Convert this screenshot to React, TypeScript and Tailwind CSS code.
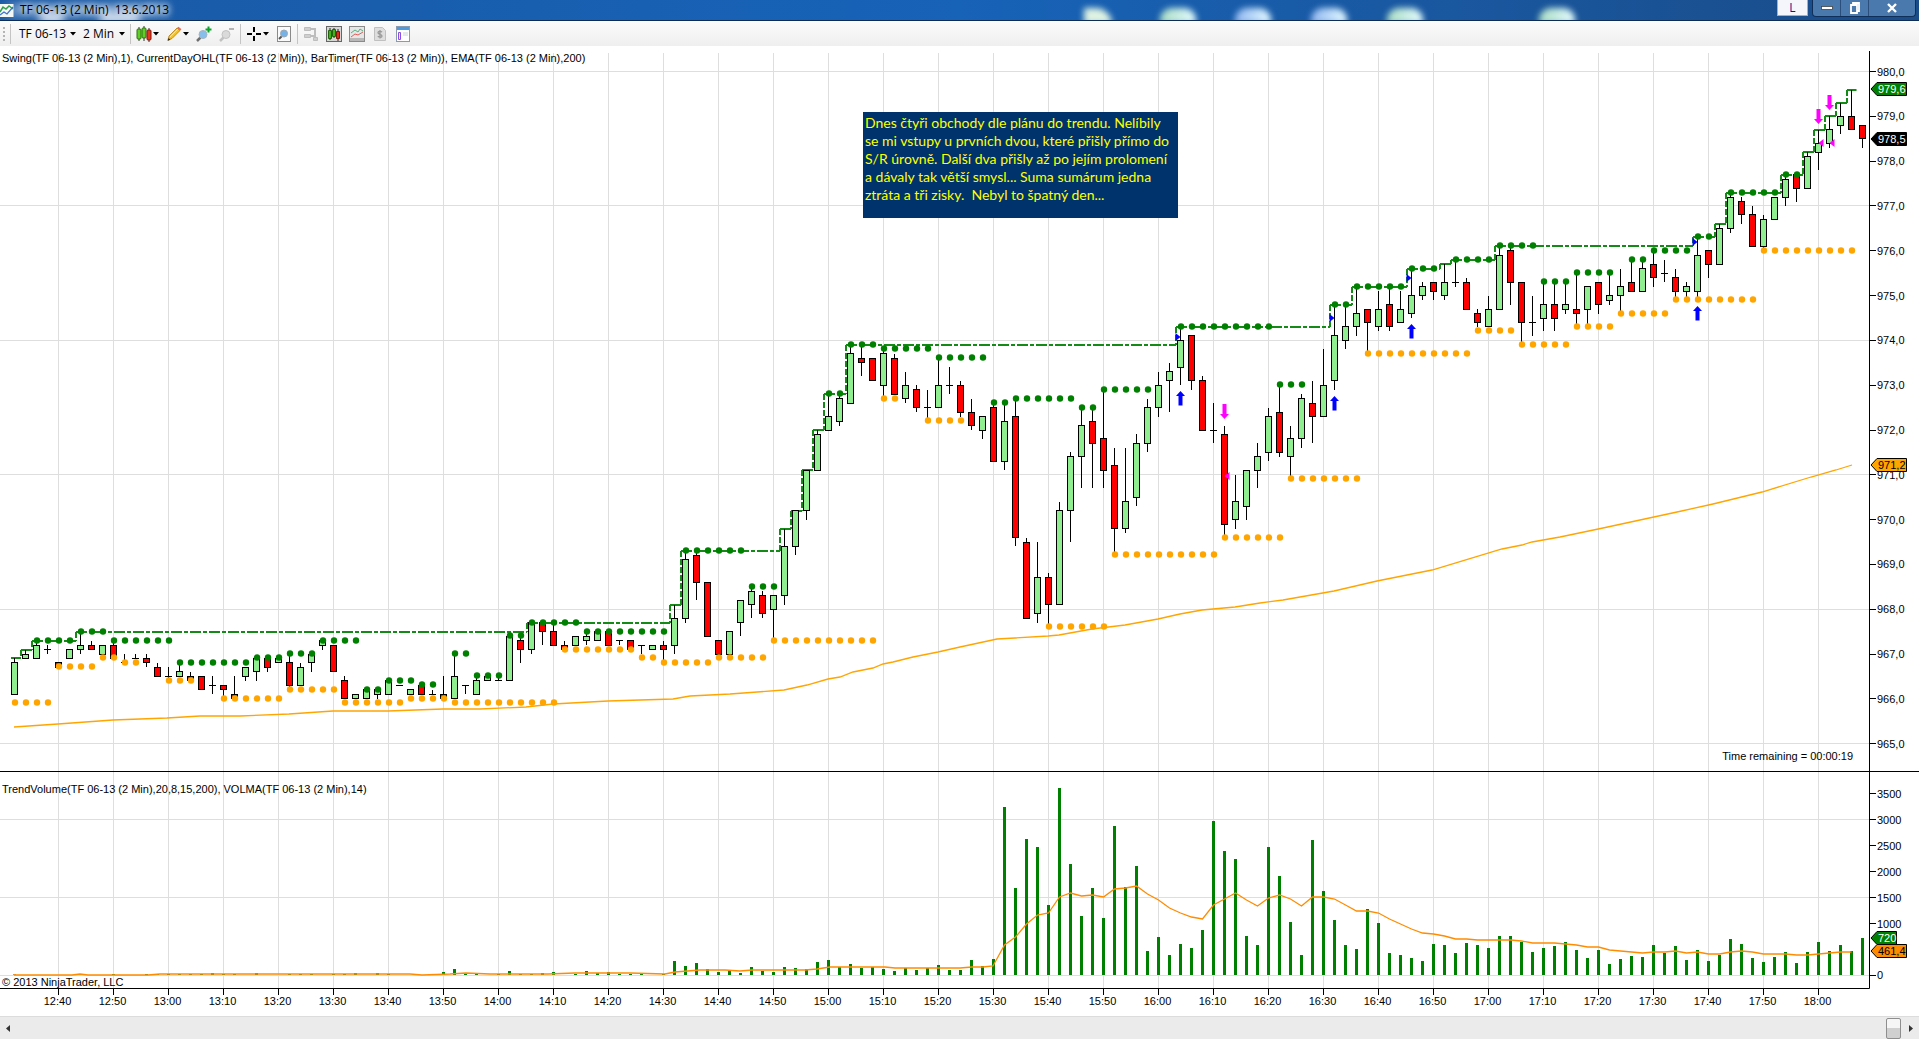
import React from 'react';

// Geometry of the chart canvas
const WIDTH = 1919;
const TOP = 46;
const HEIGHT = 970;
const AXIS_X = 1869;
const FIRST_X = 14.5;
const BAR_STEP = 11;

const barX = (i: number) => FIRST_X + i * BAR_STEP;
const priceY = (p: number) => 71.6 + (980 - p) * 44.8;
const snap = (v: number) => Math.floor(v) + 0.5;

type Candle = [open: number, high: number, low: number, close: number];
type Run = [from: number, to: number, price: number];

const candles: Candle[] = [
  [966.1, 966.9, 966.1, 966.8], [966.9, 967.1, 966.9, 967.0], [966.9, 967.3, 966.9, 967.2], [967.1, 967.2, 967.0, 967.1],
  [966.8, 966.8, 966.7, 966.7], [966.9, 967.1, 966.9, 967.1], [967.1, 967.5, 967.0, 967.2], [967.2, 967.3, 967.1, 967.1],
  [967.0, 967.2, 967.0, 967.2], [967.2, 967.3, 966.9, 966.9], [966.8, 967.0, 966.8, 966.8], [966.9, 967.0, 966.9, 966.9],
  [966.9, 967.0, 966.7, 966.8], [966.7, 966.8, 966.5, 966.5], [966.5, 966.7, 966.4, 966.5], [966.5, 966.8, 966.5, 966.6],
  [966.5, 966.6, 966.4, 966.4], [966.5, 966.5, 966.2, 966.2], [966.3, 966.5, 966.1, 966.3], [966.3, 966.3, 966.0, 966.2],
  [966.1, 966.5, 966.0, 966.0], [966.5, 966.7, 966.4, 966.7], [966.6, 966.9, 966.4, 966.9], [966.9, 966.9, 966.6, 966.7],
  [966.8, 966.9, 966.8, 966.9], [966.8, 967.0, 966.2, 966.3], [966.3, 966.8, 966.3, 966.7], [966.8, 967.0, 966.6, 967.0],
  [967.2, 967.3, 967.1, 967.3], [967.2, 967.2, 966.6, 966.6], [966.4, 966.5, 966.0, 966.0], [966.0, 966.1, 966.0, 966.1],
  [966.0, 966.2, 966.0, 966.2], [966.1, 966.2, 966.0, 966.2], [966.1, 966.4, 966.1, 966.4], [966.3, 966.3, 966.3, 966.3],
  [966.1, 966.2, 966.1, 966.2], [966.3, 966.3, 966.1, 966.1], [966.1, 966.2, 966.1, 966.1], [966.1, 966.5, 966.0, 966.0],
  [966.0, 967.0, 966.0, 966.5], [966.3, 966.3, 966.1, 966.3], [966.1, 966.5, 966.1, 966.4], [966.4, 966.5, 966.4, 966.5],
  [966.4, 966.5, 966.4, 966.4], [966.4, 967.4, 966.4, 967.4], [967.3, 967.4, 966.8, 967.1], [967.1, 967.7, 967.0, 967.7],
  [967.7, 967.7, 967.2, 967.5], [967.5, 967.7, 967.2, 967.2], [967.2, 967.3, 967.1, 967.1], [967.2, 967.4, 967.2, 967.4],
  [967.3, 967.5, 967.2, 967.4], [967.3, 967.5, 967.3, 967.5], [967.5, 967.5, 967.2, 967.2], [967.3, 967.3, 967.2, 967.3],
  [967.3, 967.3, 967.1, 967.1], [967.2, 967.2, 967.0, 967.2], [967.1, 967.2, 967.1, 967.2], [967.2, 967.3, 966.8, 967.1],
  [967.2, 968.1, 967.0, 967.8], [967.8, 969.3, 967.7, 969.1], [969.2, 969.3, 968.2, 968.6], [968.6, 968.6, 967.4, 967.4],
  [967.3, 967.3, 967.0, 967.0], [967.0, 967.5, 967.0, 967.5], [967.7, 968.2, 967.4, 968.2], [968.1, 968.5, 967.8, 968.4],
  [968.3, 968.4, 967.8, 967.9], [968.0, 968.3, 967.3, 968.3], [968.3, 969.8, 968.1, 969.4], [969.4, 970.2, 969.2, 970.2],
  [970.2, 971.1, 970.0, 971.1], [971.1, 972.0, 971.1, 971.9], [972.0, 972.8, 972.0, 972.3], [972.2, 972.8, 972.1, 972.7],
  [972.6, 973.9, 972.6, 973.7], [973.6, 973.9, 973.2, 973.5], [973.6, 973.6, 973.1, 973.1], [973.0, 973.8, 972.7, 973.7],
  [973.6, 973.7, 972.8, 972.8], [972.7, 973.3, 972.6, 973.0], [972.9, 973.0, 972.4, 972.5], [972.5, 972.9, 972.2, 972.5],
  [972.5, 973.6, 972.5, 973.0], [973.0, 973.4, 972.8, 973.0], [973.0, 973.1, 972.3, 972.4], [972.4, 972.7, 972.0, 972.1],
  [972.0, 972.3, 971.8, 972.3], [972.5, 972.6, 971.3, 971.3], [971.3, 972.6, 971.1, 972.2], [972.3, 972.7, 969.4, 969.6],
  [969.5, 969.6, 967.8, 967.8], [967.9, 969.5, 967.7, 968.7], [968.7, 968.8, 967.6, 968.1], [968.1, 970.4, 968.1, 970.2],
  [970.2, 971.5, 969.5, 971.4], [971.4, 972.5, 970.7, 972.1], [972.2, 972.5, 970.7, 971.7], [971.8, 972.9, 970.7, 971.1],
  [971.2, 971.6, 969.2, 969.8], [969.8, 971.6, 969.7, 970.4], [970.5, 971.9, 970.3, 971.7], [971.7, 972.7, 971.5, 972.5],
  [972.5, 973.3, 972.3, 973.0], [973.1, 973.5, 972.4, 973.3], [973.4, 974.3, 973.0, 974.0], [974.1, 974.1, 972.9, 973.1],
  [973.1, 973.2, 972.0, 972.0], [972.0, 972.6, 971.7, 972.0], [971.9, 972.1, 969.6, 969.9], [970.0, 971.0, 969.8, 970.4],
  [970.3, 971.1, 970.0, 971.1], [971.1, 971.7, 970.7, 971.4], [971.5, 972.5, 971.3, 972.3], [972.4, 973.0, 971.4, 971.5],
  [971.4, 972.1, 970.9, 971.8], [971.8, 972.8, 971.6, 972.7], [972.6, 973.1, 971.7, 972.3], [972.3, 973.8, 972.3, 973.0],
  [973.1, 974.8, 972.9, 974.1], [974.0, 974.8, 973.8, 974.3], [974.3, 975.2, 974.1, 974.6], [974.7, 974.7, 973.7, 974.4],
  [974.3, 975.1, 974.2, 974.7], [974.8, 975.2, 974.2, 974.3], [974.4, 975.1, 974.4, 974.7], [974.6, 975.6, 974.5, 975.0],
  [975.0, 975.3, 974.9, 975.2], [975.3, 975.3, 974.9, 975.1], [975.0, 975.7, 974.9, 975.3], [975.3, 975.8, 975.2, 975.3],
  [975.3, 975.4, 974.7, 974.7], [974.6, 974.7, 974.3, 974.4], [974.3, 975.0, 974.3, 974.7], [974.7, 976.1, 974.7, 975.9],
  [976.0, 976.1, 974.8, 975.3], [975.3, 975.3, 973.9, 974.4], [974.4, 975.0, 974.1, 974.4], [974.5, 975.3, 974.2, 974.8],
  [974.8, 975.3, 974.2, 974.5], [974.7, 975.3, 974.6, 974.8], [974.7, 975.5, 974.3, 974.6], [974.7, 975.2, 974.3, 975.2],
  [975.3, 975.3, 974.6, 974.8], [974.9, 975.5, 974.8, 975.0], [975.0, 975.6, 974.6, 975.2], [975.3, 975.8, 975.1, 975.1],
  [975.1, 975.8, 975.1, 975.6], [975.7, 976.0, 975.2, 975.4], [975.5, 975.8, 975.3, 975.5], [975.4, 975.6, 974.9, 975.1],
  [975.1, 975.3, 974.9, 975.2], [975.1, 976.3, 974.9, 975.9], [976.0, 976.0, 975.4, 975.7], [975.7, 976.6, 975.7, 976.5],
  [976.5, 977.3, 976.4, 977.2], [977.1, 977.2, 976.6, 976.8], [976.8, 977.0, 976.1, 976.1], [976.1, 976.8, 976.0, 976.7],
  [976.7, 977.2, 976.7, 977.2], [977.2, 977.7, 977.0, 977.6], [977.7, 977.7, 977.1, 977.4], [977.4, 978.2, 977.4, 978.1],
  [978.2, 978.7, 977.8, 978.4], [978.4, 979.0, 978.3, 978.7], [978.8, 979.3, 978.6, 979.0], [979.0, 979.6, 978.7, 978.7],
  [978.8, 978.8, 978.3, 978.5],
];

const swingHighs: Run[] = [
  [2, 5, 967.3], [6, 8, 967.5], [9, 14, 967.3], [15, 21, 966.8], [22, 24, 966.9], [25, 27, 967.0], [28, 31, 967.3],
  [32, 33, 966.2], [34, 36, 966.4], [37, 38, 966.3], [40, 41, 967.0], [42, 44, 966.5], [45, 46, 967.4], [47, 51, 967.7],
  [52, 59, 967.5], [61, 66, 969.3], [67, 69, 968.5], [74, 75, 972.8], [76, 78, 973.9], [79, 83, 973.8], [84, 88, 973.6],
  [89, 90, 972.6], [91, 96, 972.7], [97, 98, 972.5], [99, 103, 972.9], [106, 114, 974.3], [115, 117, 973.0],
  [120, 121, 974.8], [122, 126, 975.2], [127, 129, 975.6], [131, 134, 975.8], [135, 138, 976.1], [139, 141, 975.3],
  [142, 145, 975.5], [147, 148, 975.8], [149, 152, 976.0], [153, 154, 976.3], [156, 160, 977.3], [161, 162, 977.7],
];

const swingLows: Run[] = [
  [0, 3, 965.9], [4, 7, 966.7], [8, 9, 966.9], [10, 11, 966.8], [14, 16, 966.4], [19, 24, 966.0], [25, 29, 966.2],
  [30, 35, 965.9], [36, 39, 966.0], [40, 49, 965.9], [50, 56, 967.1], [57, 58, 966.9], [59, 63, 966.8], [64, 68, 966.9],
  [69, 78, 967.3], [79, 80, 972.7], [83, 86, 972.2], [94, 99, 967.6], [100, 109, 969.2], [110, 115, 969.6],
  [116, 122, 970.9], [123, 132, 973.7], [133, 136, 974.2], [137, 141, 973.9], [142, 145, 974.3], [146, 150, 974.6],
  [151, 158, 974.9], [159, 167, 976.0],
];

const ema =
  '14,727 58,724 113,720 167,718 200,716 240,716 289,714 333,711 388,711 443,709 480,709 526,707 553,704 608,701 673,699 690,696 730,694 784,690 807,685 828,679 840,677 853,672 873,668 883,664 893,662 913,657 938,652 960,647 997,639 1015,638 1048,636 1059,635 1070,633 1092,629 1125,625 1158,619 1180,614 1202,610 1235,607 1260,603 1283,600 1334,591 1377,581 1432,570 1502,549 1522,545 1532,542 1560,537 1603,528 1677,512 1713,504 1762,492 1811,477 1836,470 1852,465';

// Volume per bar, thirds of a pixel above the zero line
const volumes = [
  4, 0, 0, 0, 0, 0, 4, 0, 0, 3, 0, 0, 3, 3, 3, 3, 3, 3, 6, 3, 3, 0, 6, 0, 0, 3, 3, 3, 0, 3, 3, 6, 0, 6, 3, 0, 0, 0, 3,
  9, 18, 6, 6, 0, 2, 12, 3, 2, 6, 9, 0, 2, 12, 6, 9, 3, 2, 2, 0, 2, 42, 27, 36, 18, 9, 12, 6, 24, 13, 9, 24, 21, 18, 39,
  45, 24, 33, 21, 24, 18, 12, 21, 15, 21, 30, 15, 15, 45, 27, 48, 504, 261, 408, 384, 210, 561, 333, 177, 261, 171, 447,
  264, 327, 72, 114, 60, 93, 81, 135, 462, 372, 348, 117, 90, 384, 297, 159, 60, 405, 252, 165, 90, 78, 198, 156, 66, 60,
  51, 42, 93, 90, 66, 96, 90, 81, 117, 117, 99, 69, 81, 87, 99, 75, 51, 75, 33, 48, 57, 54, 90, 66, 87, 45, 75, 42, 60,
  108, 93, 51, 39, 54, 69, 36, 69, 99, 72, 90, 72, 111,
];

const volMaStart =
  '14,975 72,975 80,974 88,975 148,975 160,974 410,974 422,975 450,974 466,973 490,974 548,974 575,973 630,973 665,974 675,972 700,970 725,970 740,971 752,970 805,970 817,969 830,967 885,967 895,968 960,968 972,967 983,967 993,966';
// One value per bar from 15:32 on
const volMa = [
  945, 937, 924, 915, 913, 897, 893, 896, 895, 897, 889, 888, 886, 894, 900, 908, 913, 917, 919, 905, 899, 893, 900, 906,
  898, 895, 899, 906, 897, 897, 899, 905, 911, 911, 913, 919, 924, 929, 933, 934, 936, 939, 939, 940, 940, 940, 940, 941,
  943, 943, 943, 944, 945, 947, 947, 950, 951, 952, 953, 952, 952, 951, 953, 952, 954, 954, 952, 951, 952, 954, 954, 954,
  955, 955, 954, 953, 952, 952,
];

const VOL_ZERO = 975;
const volY = (v: number) => 975.4 - v * 0.0519;

const timeLabels = Array.from({ length: 33 }, (_, k) => {
  const minutes = 12 * 60 + 40 + k * 10;
  return {
    x: barX(4 + k * 5),
    text: `${Math.floor(minutes / 60)}:${String(minutes % 60).padStart(2, '0')}`,
  };
});

// Running high of the day, as flat stretches and the risers between them
const dayHighPaths = () => {
  let high = candles[0][1];
  let y = Math.round(priceY(high));
  let flat = `M${barX(0) - 3.5} ${y}`;
  let risers = '';
  for (let i = 1; i < candles.length - 1; i++) {
    if (candles[i][1] > high) {
      const x = barX(i) - 4.5;
      const from = y;
      high = candles[i][1];
      y = Math.round(priceY(high));
      flat += `H${x}M${x} ${y}`;
      risers += `M${x} ${y}V${from}`;
    }
  }
  return { flat: `${flat}H${barX(candles.length - 2) + 5}`, risers };
};

const DayHigh = () => {
  const { flat, risers } = dayHighPaths();
  return (
    <g stroke="#168a16" strokeWidth="2">
      <path d={flat} strokeDasharray="11 2 4 2" />
      <path d={risers} strokeDasharray="6 2" />
    </g>
  );
};

const Dots = ({ runs, color }: { runs: Run[]; color: string }) => (
  <g fill={color}>
    {runs.flatMap(([from, to, price]) =>
      Array.from({ length: to - from + 1 }, (_, k) => (
        <circle key={`${from}-${k}`} cx={barX(from + k) + 0.5} cy={Math.round(priceY(price)) - 0.5} r="3.2" />
      )),
    )}
  </g>
);

const CandleBar = ({ index, data }: { index: number; data: Candle }) => {
  const [open, high, low, close] = data;
  const x = barX(index);
  const top = snap(priceY(Math.max(open, close)));
  const bottom = snap(priceY(Math.min(open, close)));
  return (
    <g stroke="#000">
      {high !== low && <path d={`M${x} ${Math.round(priceY(high))}V${Math.round(priceY(low))}`} />}
      {open === close ? (
        <path d={`M${x - 3.5} ${top}h7`} />
      ) : (
        <rect x={x - 3} y={top} width="6" height={bottom - top} fill={close > open ? '#90ee90' : '#ff0000'} />
      )}
    </g>
  );
};

const UpArrow = ({ bar, y }: { bar: number; y: number }) => (
  <path transform={`translate(${barX(bar)} ${y})`} d="M0 0L4.5 5H2V14.5H-2V5H-4.5Z" fill="#0000ff" />
);

const DownArrow = ({ bar, y }: { bar: number; y: number }) => (
  <path transform={`translate(${barX(bar)} ${y})`} d="M0 15L4.5 10H2V0H-2V10H-4.5Z" fill="#ff00ff" />
);

interface FlagProps {
  y: number;
  right: number;
  fill: string;
  color: string;
  label: string;
}

const Flag = ({ y, right, fill, color, label }: FlagProps) => (
  <g>
    <path d={`M1871 ${y}L1877 ${y - 6.5}H${right}V${y + 6.5}H1877Z`} fill={fill} stroke="#000" />
    <text x="1878" y={y + 4} fill={color}>{label}</text>
  </g>
);

const Chart = () => (
  <svg
    viewBox={`0 ${TOP} ${WIDTH} ${HEIGHT}`}
    className="block w-full h-auto bg-white font-['Liberation_Sans',Arial,sans-serif] text-[11px]"
    fill="none"
  >
    {/* Grid */}
    <g stroke="#dedede">
      {timeLabels.map(t => <path key={t.text} d={`M${t.x} 53V988`} />)}
      {[980, 977, 974, 971, 968, 965].map(p => <path key={p} d={`M0 ${snap(priceY(p))}H${AXIS_X}`} />)}
      {[3000, 1500, 0].map(v => <path key={v} d={`M0 ${snap(volY(v))}H${AXIS_X}`} />)}
    </g>

    {/* Price panel */}
    <polyline points={ema} stroke="#ffa500" strokeWidth="1.3" />
    <DayHigh />
    {candles.map((c, i) => <CandleBar key={i} index={i} data={c} />)}
    <Dots runs={swingHighs} color="#008000" />
    <Dots runs={swingLows} color="#ffa500" />

    {/* Trades */}
    <UpArrow bar={106} y={391} />
    <UpArrow bar={120} y={396} />
    <UpArrow bar={127} y={324} />
    <UpArrow bar={153} y={306} />
    <DownArrow bar={110} y={404} />
    <DownArrow bar={164} y={109} />
    <DownArrow bar={165} y={95} />
    <g fill="#0000ff">
      {[[106, 337], [120, 318], [127, 278], [153, 242]].map(([bar, y]) => (
        <path key={bar} d={`M${barX(bar) - 5} ${y - 4}l5 4l-5 4z`} />
      ))}
    </g>
    <g fill="#ff00ff">
      {[[110, 476], [164, 143], [165, 143]].map(([bar, y]) => (
        <path key={bar} d={`M${barX(bar) + 5} ${y - 4}l-5 4l5 4z`} />
      ))}
    </g>

    {/* Volume panel */}
    <g fill="#008000">
      {volumes.map((v, i) => (
        v > 0 && (
          <rect
            key={i}
            x={barX(i) - 1.5}
            y={VOL_ZERO - Math.max(1, Math.round(v / 3))}
            width="3"
            height={Math.max(1, Math.round(v / 3))}
            fill={i < 9 ? '#a0a0a0' : undefined}
          />
        )
      ))}
    </g>
    <polyline
      points={`${volMaStart} ${volMa.map((y, k) => `${barX(90 + k)},${y}`).join(' ')}`}
      stroke="#ff8c00"
      strokeWidth="1.3"
    />

    {/* Axes */}
    <g stroke="#000">
      <path d="M1869.5 51V988.5H0" />
      <path d="M0 771.5H1919" />
      {timeLabels.map(t => <path key={t.text} d={`M${t.x} 989v6`} />)}
      {Array.from({ length: 16 }, (_, k) => <path key={k} d={`M1870 ${snap(priceY(980 - k))}h6`} />)}
      {[3500, 3000, 2500, 2000, 1500, 1000, 0].map(v => <path key={v} d={`M1870 ${snap(volY(v))}h6`} />)}
    </g>
    <g fill="#000">
      {timeLabels.map(t => <text key={t.text} x={t.x - 1} y="1005" textAnchor="middle">{t.text}</text>)}
      {Array.from({ length: 16 }, (_, k) => (
        <text key={k} x="1877" y={Math.round(priceY(980 - k)) + 4}>{980 - k},0</text>
      ))}
      {[3500, 3000, 2500, 2000, 1500, 1000, 0].map(v => (
        <text key={v} x="1877" y={Math.round(volY(v)) + 4}>{v}</text>
      ))}
    </g>
    <Flag y={89} right={1906.5} fill="#008000" color="#fff" label="979,6" />
    <Flag y={139} right={1906.5} fill="#000" color="#fff" label="978,5" />
    <Flag y={465} right={1906.5} fill="#ffa500" color="#000" label="971,2" />
    <Flag y={938} right={1896.5} fill="#008000" color="#fff" label="720" />
    <Flag y={951} right={1906.5} fill="#ff8c00" color="#000" label="461,4" />
  </svg>
);

const Caret = () => (
  <svg width="6" height="4" viewBox="0 0 6 4"><path d="M0 0h6L3 3.5z" fill="#000" /></svg>
);

const Divider = () => <span className="w-px h-5 -mx-0.5 bg-[#c4c4c4]" />;

const CandlesIcon = () => (
  <svg width="16" height="16" viewBox="0 0 16 16">
    <path d="M3 1v14M8 0v15M13 2v14" stroke="#333" />
    <rect x="1" y="3" width="4" height="10" rx="1" fill="#5fcf28" stroke="#2f6f12" />
    <rect x="6" y="2" width="4" height="10" rx="1" fill="#5fcf28" stroke="#2f6f12" />
    <rect x="11" y="4" width="4" height="10" rx="1" fill="#e8341c" stroke="#7d1a0c" />
  </svg>
);

const PencilIcon = () => (
  <svg width="16" height="16" viewBox="0 0 16 16">
    <path d="M2 14l1-4L11 2l3 2.500L6 12.500z" fill="#fbc21c" stroke="#b97a08" strokeWidth=".8" />
    <path d="M11 2l1.500-1.300 3 2.600L14 4.500z" fill="#e36a5c" />
    <path d="M1.500 15l1-3 2 1.700z" fill="#333" />
    <path d="M4 11l8-8" stroke="#ffe88a" />
  </svg>
);

const ZoomIcon = ({ out = false }: { out?: boolean }) => (
  <svg width="16" height="16" viewBox="0 0 16 16">
    <path d="M4.500 11.500L1 15" stroke={out ? '#c2c2c2' : '#6f6f6f'} strokeWidth="2.500" />
    <circle cx="7" cy="8.500" r="4" fill={out ? '#dadada' : '#86bfec'} stroke={out ? '#c2c2c2' : '#a9b4bd'} />
    <path d={out ? 'M10 3h5' : 'M9.500 3.500h6M12.500.500v6'} stroke={out ? '#b4b4b4' : '#0aa32a'} strokeWidth="2" />
  </svg>
);

const CrosshairIcon = () => (
  <svg width="16" height="16" viewBox="0 0 16 16">
    <path d="M8 1v5M8 10v5M1 8h5M10 8h5" stroke="#000" strokeWidth="2" />
  </svg>
);

const PageZoomIcon = () => (
  <svg width="16" height="16" viewBox="0 0 16 16">
    <rect x="1.500" y=".500" width="13" height="15" fill="#fafafa" stroke="#8a8a8a" />
    <path d="M6 10l-3 3" stroke="#555" strokeWidth="2" />
    <circle cx="8" cy="7.500" r="3.500" fill="#74b2ea" stroke="#9aa8b4" />
  </svg>
);

const TreeIcon = () => (
  <svg width="16" height="16" viewBox="0 0 16 16" fill="#cfcfcf" stroke="#bdbdbd">
    <path d="M1.500 1.500h6v3h-6zM1.500 8.500h6v3h-6zM10.500 11.500h4v3h-4z" />
    <path d="M8 3h4v8M8 10h4" fill="none" strokeWidth="2" />
  </svg>
);

const BarsPageIcon = () => (
  <svg width="16" height="16" viewBox="0 0 16 16">
    <rect x=".500" y=".500" width="15" height="15" fill="#d6d6d6" stroke="#666" />
    <path d="M4 2v12M8 2v10M12 3v12" stroke="#222" />
    <path d="M2.500 4.500h3v8h-3zM6.500 3.500h3v7h-3z" fill="#3fb51a" stroke="#24610e" />
    <path d="M10.500 5.500h3v7h-3z" fill="#dd2b1c" stroke="#7d1a0c" />
  </svg>
);

const LinesPageIcon = () => (
  <svg width="16" height="16" viewBox="0 0 16 16" fill="none">
    <rect x=".500" y=".500" width="15" height="15" fill="#e6e6e6" stroke="#8a8a8a" />
    <path d="M2 7l4-3 3 2 2-3 3 2" stroke="#58b080" />
    <path d="M2 11l4-3 3 1 5-3" stroke="#e0605c" />
    <path d="M1 12h14v3H1z" fill="#b8b8b8" />
  </svg>
);

const DollarPageIcon = () => (
  <svg width="16" height="16" viewBox="0 0 16 16" fill="none">
    <path d="M2.500 1.500h8l3 3v10h-11z" fill="#dedede" stroke="#c0c0c0" />
    <path d="M10 6.200C9 5 6 5 6 6.700S10 8.200 10 10 7 11.500 5.800 10.300M8 4v8.500" stroke="#999" strokeWidth="1.300" />
  </svg>
);

const LayoutIcon = () => (
  <svg width="16" height="16" viewBox="0 0 16 16">
    <rect x="1.500" y=".500" width="13" height="15" fill="#fff" stroke="#8a9bb0" />
    <path d="M2 1h12v3H2z" fill="#4c9be0" />
    <path d="M3.500 6.500h2v7h-2z" fill="#e9dcff" stroke="#8a4fe0" />
    <path d="M8 7h5M8 9h5" stroke="#c9d2dc" />
  </svg>
);

const TitleBar = () => (
  <header className="relative flex items-center justify-between h-5 bg-linear-to-r from-[#1a5aa6] via-[#1763b8] to-[#1a4c88] overflow-hidden">
    {/* Desktop icons shining through the glass */}
    <div className="absolute inset-0">
      <span className="absolute left-2 top-1 w-40 h-3 bg-white/40 blur-[5px]" />
      <span className="absolute left-10 top-3 w-6 h-3 bg-white/80 blur-[4px]" />
      <span className="absolute left-[100px] top-3 w-10 h-3 bg-white/80 blur-[4px]" />
      <span className="absolute left-[1084px] top-2 w-7 h-4 rounded-tr-2xl bg-[#e0f3e2] blur-[3px]" />
      <span className="absolute left-[1160px] top-2 w-9 h-4 rounded-t-xl bg-linear-to-r from-[#a9dcc2] to-[#e4fbff] blur-[3px]" />
      <span className="absolute left-[1235px] top-2 w-9 h-4 rounded-t-xl bg-linear-to-r from-[#8fb4ee] to-[#e4fbff] blur-[3px]" />
      <span className="absolute left-[1311px] top-2 w-9 h-4 rounded-t-xl bg-linear-to-r from-[#8fb4ee] to-[#e4fbff] blur-[3px]" />
      <span className="absolute left-[1387px] top-2 w-9 h-4 rounded-t-xl bg-linear-to-r from-[#a9dcc2] to-[#e4fbff] blur-[3px]" />
      <span className="absolute left-[1539px] top-2 w-9 h-4 rounded-t-xl bg-linear-to-r from-[#a9dcc2] to-[#e4fbff] blur-[3px]" />
    </div>
    <div className="relative flex items-center gap-1.5">
      <svg width="14" height="13" viewBox="0 0 14 13" fill="none">
        <rect x="-1" width="14.500" height="13" fill="#f4f7f4" />
        <path d="M0 8l3-5 3 2 3-3 4 3" stroke="#2f9f4f" strokeWidth="1.500" />
        <path d="M0 11l4-3 3 2 6-7" stroke="#3a6fd0" strokeWidth="1.200" />
      </svg>
      <h1 className="text-xs text-black whitespace-pre [text-shadow:0_0_6px_#ffffffcc,0_0_6px_#ffffffcc]">TF 06-13 (2 Min)  13.6.2013</h1>
    </div>
    <div className="relative flex self-start gap-1 pr-[3px]">
      <button className="w-[31px] h-4 bg-[#f4f6fc] border border-t-0 border-[#62c8f0] text-xs leading-3 text-[#15158a]">L</button>
      <div className="flex h-[17px] rounded-b border border-t-0 border-[#0f2f58] bg-[#4a79ad] divide-x divide-[#2a4f7d]">
        <button aria-label="Minimize" className="w-7 flex justify-center items-center">
          <svg width="12" height="6" viewBox="0 0 12 6"><rect x=".500" y="1.500" width="11" height="3" fill="#fff" stroke="#444" strokeWidth=".800" /></svg>
        </button>
        <button aria-label="Restore" className="w-7 flex justify-center items-center">
          <svg width="12" height="12" viewBox="0 0 12 12" fill="none" stroke="#fff" strokeWidth="1.800"><path d="M4 3V1h6v8H8M2 3h6v8H2z" /></svg>
        </button>
        <button aria-label="Close" className="w-[46px] flex justify-center items-center">
          <svg width="12" height="10" viewBox="0 0 12 10"><path d="M2 1l8 8M10 1L2 9" stroke="#fff" strokeWidth="2.400" /></svg>
        </button>
      </div>
    </div>
  </header>
);

const toolButton = 'flex items-center gap-px';

const Toolbar = () => (
  <nav className="flex items-center h-[26px] pl-[3px] gap-[7px] border-t border-[#0e2c54] bg-linear-to-b from-[#fbfbfb] to-[#efefef] text-xs text-black">
    <svg width="2" height="16" viewBox="0 0 2 16"><path d="M1 1v14" stroke="#b5b5b5" strokeWidth="2" strokeDasharray="2 2" /></svg>
    <Divider />
    <button className="flex items-center justify-between w-[60px] pl-[3px]">TF 06-13 <Caret /></button>
    <button className="flex items-center justify-between w-[42px]">2 Min <Caret /></button>
    <Divider />
    <button aria-label="Chart style" className={toolButton}><CandlesIcon /><Caret /></button>
    <button aria-label="Draw" className={toolButton}><PencilIcon /><Caret /></button>
    <button aria-label="Zoom in"><ZoomIcon /></button>
    <button aria-label="Zoom out"><ZoomIcon out /></button>
    <Divider />
    <button aria-label="Cursor" className={toolButton}><CrosshairIcon /><Caret /></button>
    <button aria-label="Data box"><PageZoomIcon /></button>
    <Divider />
    <button aria-label="Chart trader"><TreeIcon /></button>
    <button aria-label="Data series"><BarsPageIcon /></button>
    <button aria-label="Indicators"><LinesPageIcon /></button>
    <button aria-label="Strategies"><DollarPageIcon /></button>
    <button aria-label="Properties"><LayoutIcon /></button>
  </nav>
);

const NOTE = `Dnes čtyři obchody dle plánu do trendu. Nelíbily
se mi vstupy u prvních dvou, které přišly přímo do
S/R úrovně. Další dva přišly až po jejím prolomení
a dávaly tak větší smysl... Suma sumárum jedna
ztráta a tři zisky.  Nebyl to špatný den...`;

const ScrollBar = () => (
  <footer className="flex items-center justify-between h-[23px] px-1.5 border-t border-[#dcdcdc] bg-[#ebebeb]">
    <button aria-label="Scroll left">
      <svg width="4" height="7" viewBox="0 0 4 7"><path d="M4 0v7L0 3.500z" fill="#333" /></svg>
    </button>
    <div className="flex items-center gap-2">
      <button aria-label="Scroll position" className="w-[15px] h-[21px] rounded-xs border border-[#8e8e8e] bg-linear-to-b from-[#f6f6f6] from-45% to-[#d0d0d0] to-50%" />
      <button aria-label="Scroll right">
        <svg width="4" height="7" viewBox="0 0 4 7"><path d="M0 0v7l4-3.500z" fill="#333" /></svg>
      </button>
    </div>
  </footer>
);

const App: React.FC = () => {
  return (
    <div className="w-full bg-white overflow-hidden font-['Open_Sans','Noto_Sans',sans-serif]">
      <TitleBar />
      <Toolbar />
      <main className="relative font-['Liberation_Sans',Arial,sans-serif] text-[11px] leading-4 text-black">
        <Chart />
        <p className="absolute left-0.5 top-1">
          Swing(TF 06-13 (2 Min),1), CurrentDayOHL(TF 06-13 (2 Min)), BarTimer(TF 06-13 (2 Min)), EMA(TF 06-13 (2 Min),200)
        </p>
        <p className="absolute left-0.5 top-[735px]">TrendVolume(TF 06-13 (2 Min),20,8,15,200), VOLMA(TF 06-13 (2 Min),14)</p>
        <p className="absolute left-0.5 top-[928px]">© 2013 NinjaTrader, LLC</p>
        <p className="absolute right-[66px] top-[702px]">Time remaining = 00:00:19</p>
        <div className="absolute left-[863px] top-[66px] w-[315px] h-[106px] pl-0.5 pt-0.5 bg-[#00336c] text-[#ffff00] font-['Lato',sans-serif] text-sm leading-[18px] whitespace-pre">
          {NOTE}
        </div>
      </main>
      <ScrollBar />
    </div>
  );
};

export default App;
